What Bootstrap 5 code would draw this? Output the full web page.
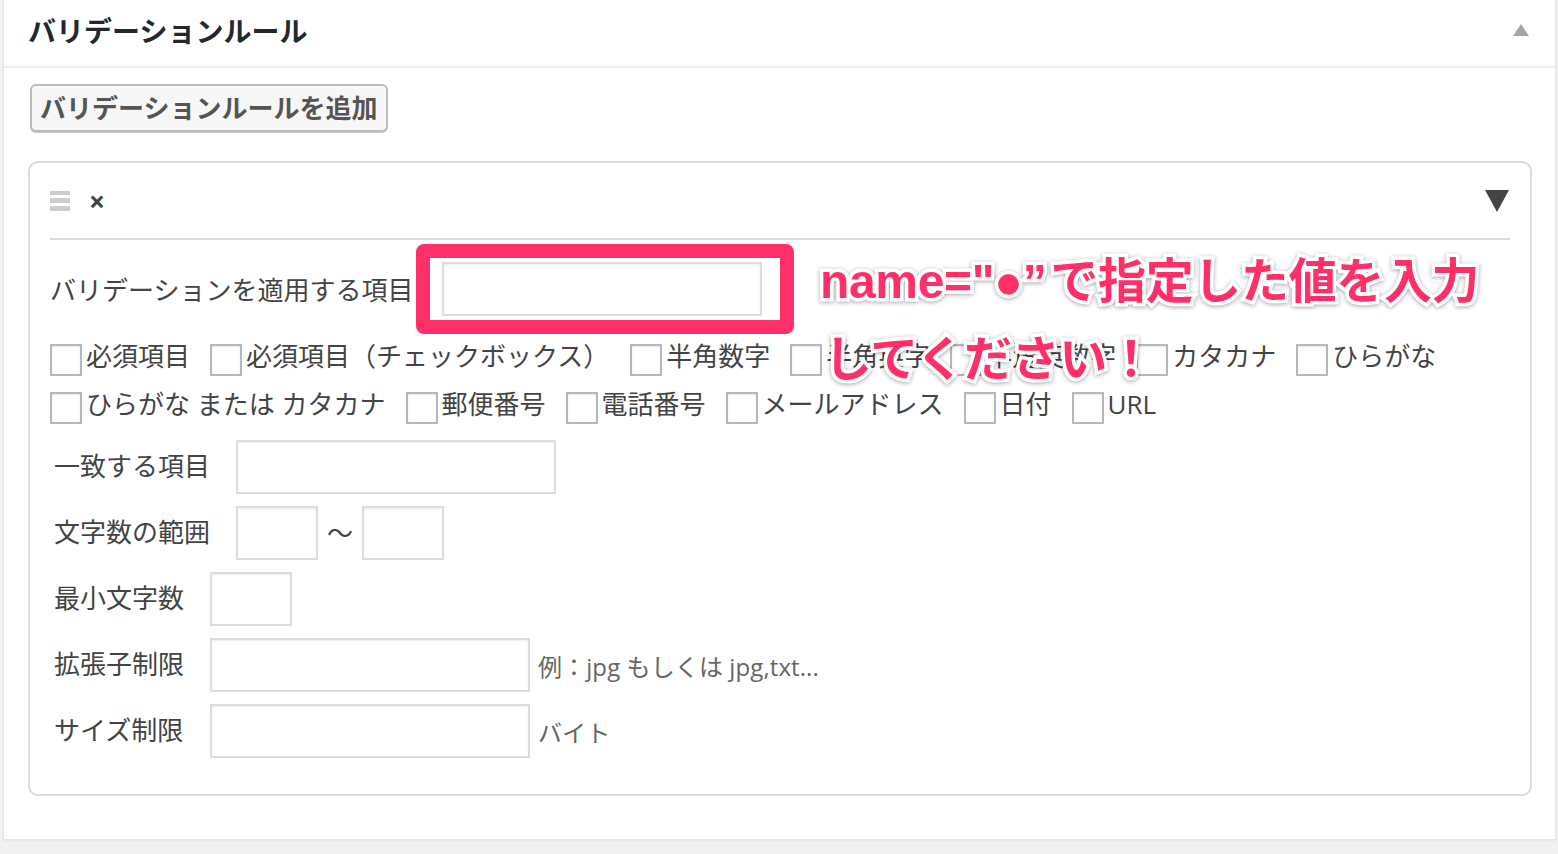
<!DOCTYPE html>
<html lang="ja">
<head>
<meta charset="utf-8">
<title>バリデーションルール</title>
<link href="https://cdn.jsdelivr.net/npm/bootstrap@5.3.0/dist/css/bootstrap.min.css" rel="stylesheet">
<style>
html, body { height: 100%; }
body { background: #f1f1f1; font-family: "Open Sans", "Noto Sans CJK JP", sans-serif; color: #444; font-size: 26px; line-height: 36px; overflow: hidden; }
.panel-box { position: relative; width: 1553px; height: 840px; margin-left: 3px; background: #fff; border: 1px solid #e5e5e5; border-top: 0; box-shadow: 0 1px 2px rgba(0,0,0,.05); }
.panel-head { height: 68px; border-bottom: 2px solid #eee; padding: 0 26px 6px 24px; }
.panel-title { font-size: 28px; font-weight: 700; color: #23282d; margin: 0; line-height: 40px; font-family: "Noto Sans CJK JP", sans-serif; }
.panel-body-area { padding: 16px 23px 0 24px; }
.tri-up { width: 0; height: 0; border-left: 8px solid transparent; border-right: 8px solid transparent; border-bottom: 12px solid #a0a5aa; }
.tri-down { width: 0; height: 0; margin-right: 1px; border-left: 12px solid transparent; border-right: 12px solid transparent; border-top: 22px solid #444; }
.add-btn { margin-left: 2px; height: 48px; padding: 0 9px 2px 8px; font-size: 26px; font-weight: 700; line-height: 40px; color: #555; background: #f7f7f7; border: 2px solid #bbb; border-radius: 6px; font-family: "Noto Sans CJK JP", sans-serif; box-shadow: 0 1px 0 #ccc; }
.rule-box { margin-top: 29px; height: 635px; padding: 0 20px; border: 2px solid #ddd; border-radius: 10px; }
.rule-head { height: 77px; border-bottom: 2px solid #ddd; }
.grip { width: 20px; height: 20px; gap: 3px; }
.grip span { height: 5px; background: #ccc; display: block; }
.close-x { margin-left: 19px; font-size: 28px; font-weight: 700; line-height: 26px; color: #444; }
.target-row { margin-top: 22px; }
.target-row .line-label { top: 1px; }
.target-row .field { margin-left: 29px; }
.field { height: 54px; border: 2px solid #ddd; border-radius: 0; padding: 6px; box-shadow: inset 0 1px 2px rgba(0,0,0,.07); background: #fff; display: block; }
.w-long { width: 320px; }
.w-short { width: 82px; }
.check-list { margin-top: 28px; row-gap: 16px; }
.check-item { gap: 4px; margin-right: 20px; height: 32px; line-height: 24px; }
.check-item.roomy { margin-right: 21px; }
.tick { width: 32px; height: 32px; flex: none; margin: 0; border: 2px solid #b4b9be; border-radius: 0; background: #fff; box-shadow: inset 0 1px 2px rgba(0,0,0,.1); appearance: none; }
.tick-label { white-space: nowrap; }
.form-line { margin-top: 12px; padding-left: 4px; }
.form-line.first { margin-top: 16px; }
.line-label { white-space: nowrap; position: relative; top: -1px; }
.label-six { width: 182px; }
.label-five { width: 156px; }
.range-sep { width: 44px; text-align: center; }
.hint { margin-left: 8px; color: #666; font-size: 24px; letter-spacing: .1px; white-space: nowrap; position: relative; top: 2px; }
.call-frame { position: absolute; left: 412px; top: 244px; width: 378px; height: 90px; border: 14px solid #ff3068; border-radius: 8px; }
.call-text { position: absolute; white-space: nowrap; font-family: "Noto Sans CJK JP", sans-serif; font-weight: 700; color: #ff3068; -webkit-text-stroke: 7px #fff; paint-order: stroke fill; filter: drop-shadow(0 1px 2px rgba(0,0,0,.35)); font-size: 48px; line-height: 70px; letter-spacing: -.35px; }
.call-one { left: 816px; top: 242px; }
.call-one .latin { font-family: "Liberation Sans", sans-serif; margin-right: 4px; }
.call-two { left: 820px; top: 320px; }
</style>
</head>
<body>
<div class="panel-box">
  <div class="panel-head d-flex align-items-center justify-content-between">
    <h2 class="panel-title">バリデーションルール</h2>
    <span class="tri-up"></span>
  </div>
  <div class="panel-body-area">
    <button type="button" class="btn add-btn d-block">バリデーションルールを追加</button>
    <div class="rule-box">
      <div class="rule-head d-flex align-items-center justify-content-between">
        <div class="d-flex align-items-center">
          <div class="grip d-flex flex-column"><span></span><span></span><span></span></div>
          <span class="close-x">×</span>
        </div>
        <span class="tri-down"></span>
      </div>
      <div class="target-row d-flex align-items-center">
        <span class="line-label">バリデーションを適用する項目</span>
        <input type="text" class="field w-long" aria-label="バリデーションを適用する項目">
      </div>
      <div class="check-list d-flex flex-wrap">
        <label class="check-item d-flex"><input type="checkbox" class="tick"><span class="tick-label">必須項目</span></label>
        <label class="check-item roomy d-flex"><input type="checkbox" class="tick"><span class="tick-label">必須項目（チェックボックス）</span></label>
        <label class="check-item d-flex"><input type="checkbox" class="tick"><span class="tick-label">半角数字</span></label>
        <label class="check-item d-flex"><input type="checkbox" class="tick"><span class="tick-label">半角英字</span></label>
        <label class="check-item d-flex"><input type="checkbox" class="tick"><span class="tick-label">半角英数字</span></label>
        <label class="check-item d-flex"><input type="checkbox" class="tick"><span class="tick-label">カタカナ</span></label>
        <label class="check-item d-flex"><input type="checkbox" class="tick"><span class="tick-label">ひらがな</span></label>
        <label class="check-item d-flex"><input type="checkbox" class="tick"><span class="tick-label">ひらがな または カタカナ</span></label>
        <label class="check-item d-flex"><input type="checkbox" class="tick"><span class="tick-label">郵便番号</span></label>
        <label class="check-item d-flex"><input type="checkbox" class="tick"><span class="tick-label">電話番号</span></label>
        <label class="check-item d-flex"><input type="checkbox" class="tick"><span class="tick-label">メールアドレス</span></label>
        <label class="check-item d-flex"><input type="checkbox" class="tick"><span class="tick-label">日付</span></label>
        <label class="check-item d-flex"><input type="checkbox" class="tick"><span class="tick-label">URL</span></label>
      </div>
      <div class="form-line first d-flex align-items-center">
        <span class="line-label label-six">一致する項目</span>
        <input type="text" class="field w-long" aria-label="一致する項目">
      </div>
      <div class="form-line d-flex align-items-center">
        <span class="line-label label-six">文字数の範囲</span>
        <input type="text" class="field w-short" aria-label="最小">
        <span class="range-sep">〜</span>
        <input type="text" class="field w-short" aria-label="最大">
      </div>
      <div class="form-line d-flex align-items-center">
        <span class="line-label label-five">最小文字数</span>
        <input type="text" class="field w-short" aria-label="最小文字数">
      </div>
      <div class="form-line d-flex align-items-center">
        <span class="line-label label-five">拡張子制限</span>
        <input type="text" class="field w-long" aria-label="拡張子制限">
        <span class="hint">例：jpg もしくは jpg,txt...</span>
      </div>
      <div class="form-line d-flex align-items-center">
        <span class="line-label label-five">サイズ制限</span>
        <input type="text" class="field w-long" aria-label="サイズ制限">
        <span class="hint">バイト</span>
      </div>
    </div>
  </div>
  <div class="call-frame"></div>
  <div class="call-text call-one"><span class="latin">name="●”</span>で指定した値を入力</div>
  <div class="call-text call-two">してください！</div>
</div>
<script src="https://cdn.jsdelivr.net/npm/bootstrap@5.3.0/dist/js/bootstrap.bundle.min.js"></script>
</body>
</html>
